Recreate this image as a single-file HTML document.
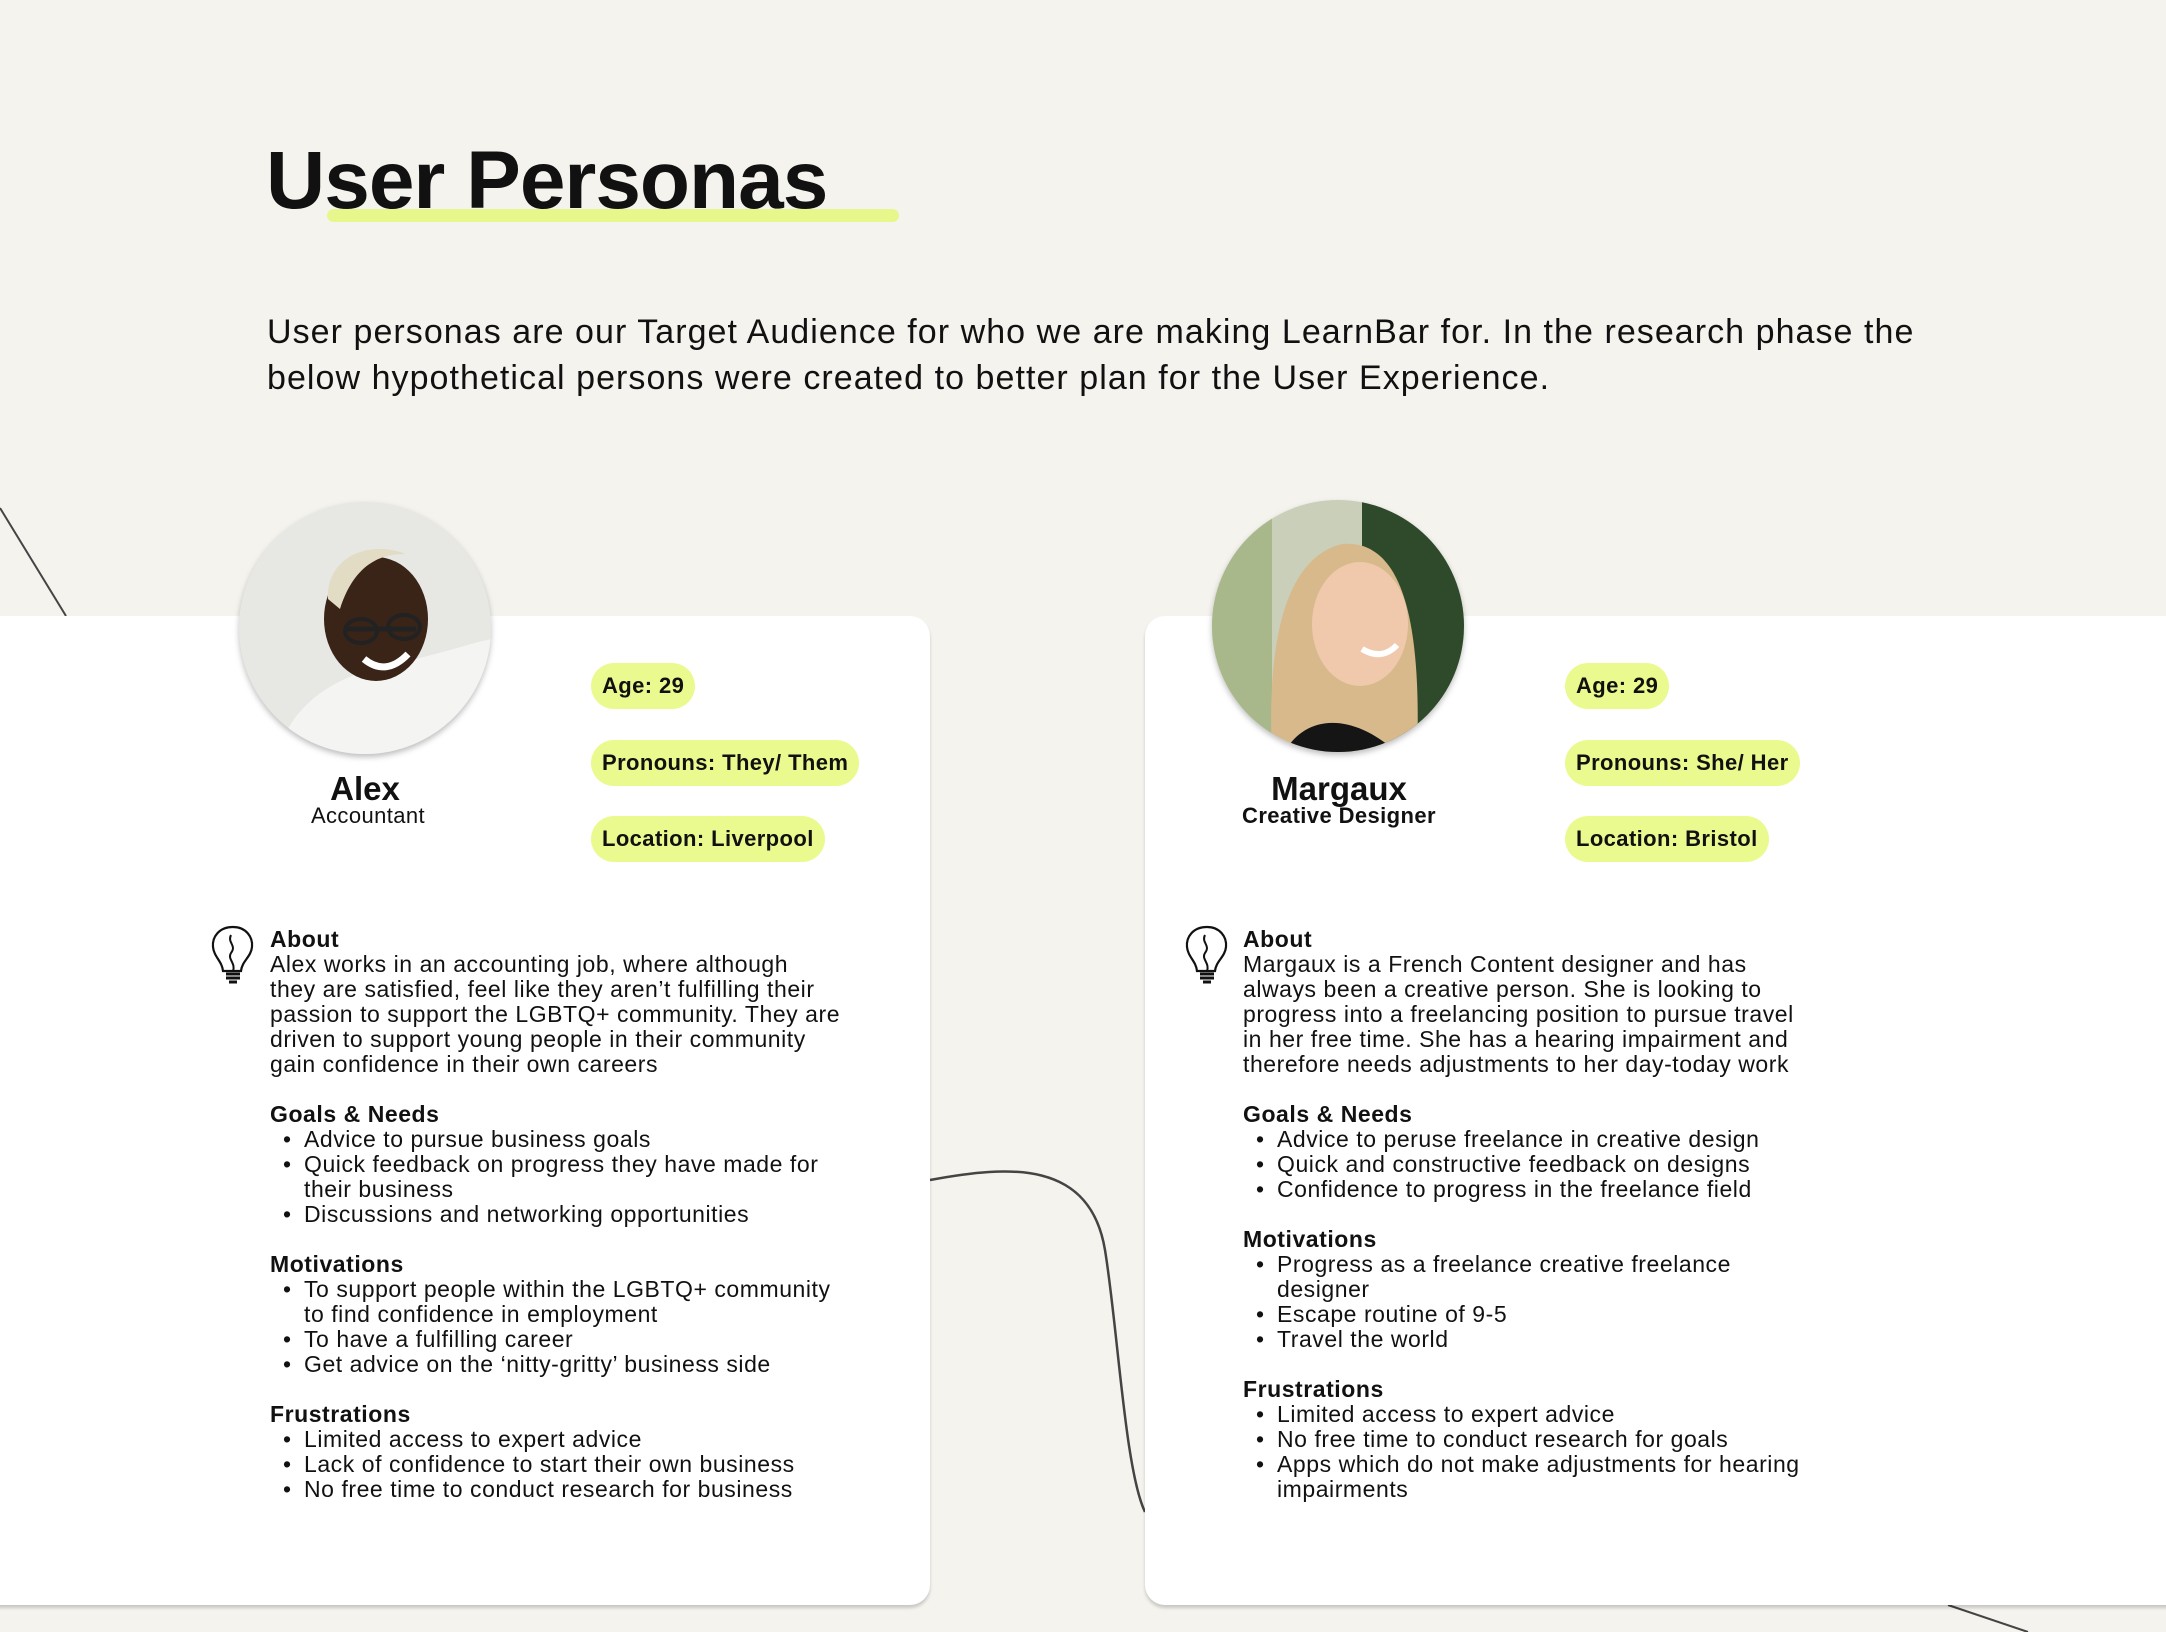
<!DOCTYPE html>
<html><head><meta charset="utf-8"><style>
*{margin:0;padding:0;box-sizing:border-box}
body{width:2166px;height:1632px;background:#f5f3ee;position:relative;overflow:hidden;font-family:"Liberation Sans",sans-serif;color:#111}
.abs{position:absolute}
h1{position:absolute;left:266px;top:140px;font-size:82px;font-weight:700;letter-spacing:-1px;z-index:2;line-height:1}
.hl{position:absolute;left:327px;top:209px;width:572px;height:13px;background:#e8f78c;border-radius:7px;z-index:1}
.intro{position:absolute;left:267px;top:310px;font-size:34px;line-height:45.5px;width:1800px;letter-spacing:1.05px}
.card{position:absolute;top:616px;height:989px;background:#fff;border-radius:20px;box-shadow:0 3px 3px rgba(0,0,0,.18)}
.pill{position:absolute;height:46px;line-height:46px;padding:0 11px;background:#eafa8e;border-radius:23px;font-size:22px;font-weight:700;white-space:nowrap;letter-spacing:.4px}
.name{position:absolute;width:300px;text-align:center;font-size:33px;font-weight:700;line-height:1}
.role{position:absolute;width:300px;text-align:center;font-size:22px;line-height:1;letter-spacing:.4px}
.txt{position:absolute;top:927px;font-size:23px;line-height:25px;letter-spacing:.55px}
.txt b{font-weight:700}
.txt ul{list-style:none;padding-left:0}
.txt li{position:relative;padding-left:34px}
.txt li:before{content:"•";position:absolute;left:13px}
.gap{height:25px}
</style></head><body>
<svg class="abs" style="left:0;top:0" width="2166" height="1632">
<path d="M0,508 L66,616" stroke="#444" stroke-width="2" fill="none"/>
<path d="M930,1180 C1010,1165 1090,1160 1105,1250 C1118,1330 1125,1470 1145,1512" stroke="#444" stroke-width="2.5" fill="none"/>
<path d="M1948,1605 L2028,1632" stroke="#444" stroke-width="2" fill="none"/>
</svg>
<div class="hl"></div>
<h1>User Personas</h1>
<div class="intro">User personas are our Target Audience for who we are making LearnBar for. In the research phase the<br>below hypothetical persons were created to better plan for the User Experience.</div>

<div class="card" style="left:-20px;width:950px"></div>
<div class="card" style="left:1145px;width:1060px"></div>

<svg class="abs" style="left:236px;top:499px;filter:drop-shadow(0 3px 3px rgba(0,0,0,.25))" width="258" height="258">
<defs><clipPath id="c1"><circle cx="129" cy="129" r="126"/></clipPath></defs>
<g clip-path="url(#c1)">
<rect width="258" height="258" fill="#e7e7e4"/>
<path d="M40,258 C60,190 120,170 180,160 C220,150 250,140 258,140 L258,258Z" fill="#f4f4f2"/>
<ellipse cx="140" cy="120" rx="52" ry="62" fill="#3a2418"/>
<path d="M92,100 C90,60 130,40 170,55 C150,55 120,60 104,110Z" fill="#e2dcc4"/>
<path d="M110,130 h70" stroke="#222" stroke-width="5"/>
<ellipse cx="125" cy="132" rx="16" ry="12" fill="none" stroke="#222" stroke-width="4"/>
<ellipse cx="168" cy="128" rx="16" ry="12" fill="none" stroke="#222" stroke-width="4"/>
<path d="M128,160 Q150,178 172,155" stroke="#fff" stroke-width="7" fill="none"/>
</g></svg>

<svg class="abs" style="left:1212px;top:499px;filter:drop-shadow(0 3px 3px rgba(0,0,0,.25))" width="258" height="258">
<defs><clipPath id="c2"><circle cx="126" cy="127" r="126"/></clipPath></defs>
<g clip-path="url(#c2)">
<rect width="258" height="258" fill="#c9cfb8"/>
<rect x="150" width="108" height="258" fill="#2e4a2a"/>
<rect width="60" height="258" fill="#a8b88a"/>
<path d="M60,258 C55,150 70,60 130,45 C190,40 210,120 205,258Z" fill="#d8b98c"/>
<ellipse cx="148" cy="125" rx="48" ry="62" fill="#f0c9ad"/>
<path d="M70,258 C90,215 140,210 190,258Z" fill="#151515"/>
<path d="M150,150 Q170,162 185,146" stroke="#fff" stroke-width="6" fill="none"/>
</g></svg>

<div class="name" style="left:215px;top:772px">Alex</div>
<div class="role" style="left:218px;top:805px">Accountant</div>
<div class="name" style="left:1189px;top:772px">Margaux</div>
<div class="role" style="left:1189px;top:805px;font-weight:700">Creative Designer</div>

<div class="pill" style="left:591px;top:663px">Age: 29</div>
<div class="pill" style="left:591px;top:740px">Pronouns: They/ Them</div>
<div class="pill" style="left:591px;top:816px">Location: Liverpool</div>
<div class="pill" style="left:1565px;top:663px">Age: 29</div>
<div class="pill" style="left:1565px;top:740px">Pronouns: She/ Her</div>
<div class="pill" style="left:1565px;top:816px">Location: Bristol</div>

<svg class="abs" style="left:209px;top:925px" width="48" height="62" viewBox="0 0 48 62">
<path d="M24,2 C10,2 3,12 4,22 C5,32 13,36 14,46 L32,46 C33,36 42,32 43,22 C44,12 37,2 24,2Z" fill="none" stroke="#111" stroke-width="2.2"/>
<path d="M22,10 C18,18 28,20 22,28 C18,34 27,38 24,46" fill="none" stroke="#111" stroke-width="2"/>
<path d="M17,49 h14 M17,53 h14 M20,57 h8" stroke="#111" stroke-width="3"/>
</svg>
<svg class="abs" style="left:1183px;top:925px" width="48" height="62" viewBox="0 0 48 62">
<path d="M24,2 C10,2 3,12 4,22 C5,32 13,36 14,46 L32,46 C33,36 42,32 43,22 C44,12 37,2 24,2Z" fill="none" stroke="#111" stroke-width="2.2"/>
<path d="M22,10 C18,18 28,20 22,28 C18,34 27,38 24,46" fill="none" stroke="#111" stroke-width="2"/>
<path d="M17,49 h14 M17,53 h14 M20,57 h8" stroke="#111" stroke-width="3"/>
</svg>

<div class="txt" style="left:270px">
<b>About</b><br>Alex works in an accounting job, where although<br>they are satisfied, feel like they aren’t fulfilling their<br>passion to support the LGBTQ+ community. They are<br>driven to support young people in their community<br>gain confidence in their own careers
<div class="gap"></div>
<b>Goals &amp; Needs</b>
<ul><li>Advice to pursue business goals</li><li>Quick feedback on progress they have made for<br>their business</li><li>Discussions and networking opportunities</li></ul>
<div class="gap"></div>
<b>Motivations</b>
<ul><li>To support people within the LGBTQ+ community<br>to find confidence in employment</li><li>To have a fulfilling career</li><li>Get advice on the ‘nitty-gritty’ business side</li></ul>
<div class="gap"></div>
<b>Frustrations</b>
<ul><li>Limited access to expert advice</li><li>Lack of confidence to start their own business</li><li>No free time to conduct research for business</li></ul>
</div>

<div class="txt" style="left:1243px">
<b>About</b><br>Margaux is a French Content designer and has<br>always been a creative person. She is looking to<br>progress into a freelancing position to pursue travel<br>in her free time. She has a hearing impairment and<br>therefore needs adjustments to her day-today work
<div class="gap"></div>
<b>Goals &amp; Needs</b>
<ul><li>Advice to peruse freelance in creative design</li><li>Quick and constructive feedback on designs</li><li>Confidence to progress in the freelance field</li></ul>
<div class="gap"></div>
<b>Motivations</b>
<ul><li>Progress as a freelance creative freelance<br>designer</li><li>Escape routine of 9-5</li><li>Travel the world</li></ul>
<div class="gap"></div>
<b>Frustrations</b>
<ul><li>Limited access to expert advice</li><li>No free time to conduct research for goals</li><li>Apps which do not make adjustments for hearing<br>impairments</li></ul>
</div>
</body></html>
